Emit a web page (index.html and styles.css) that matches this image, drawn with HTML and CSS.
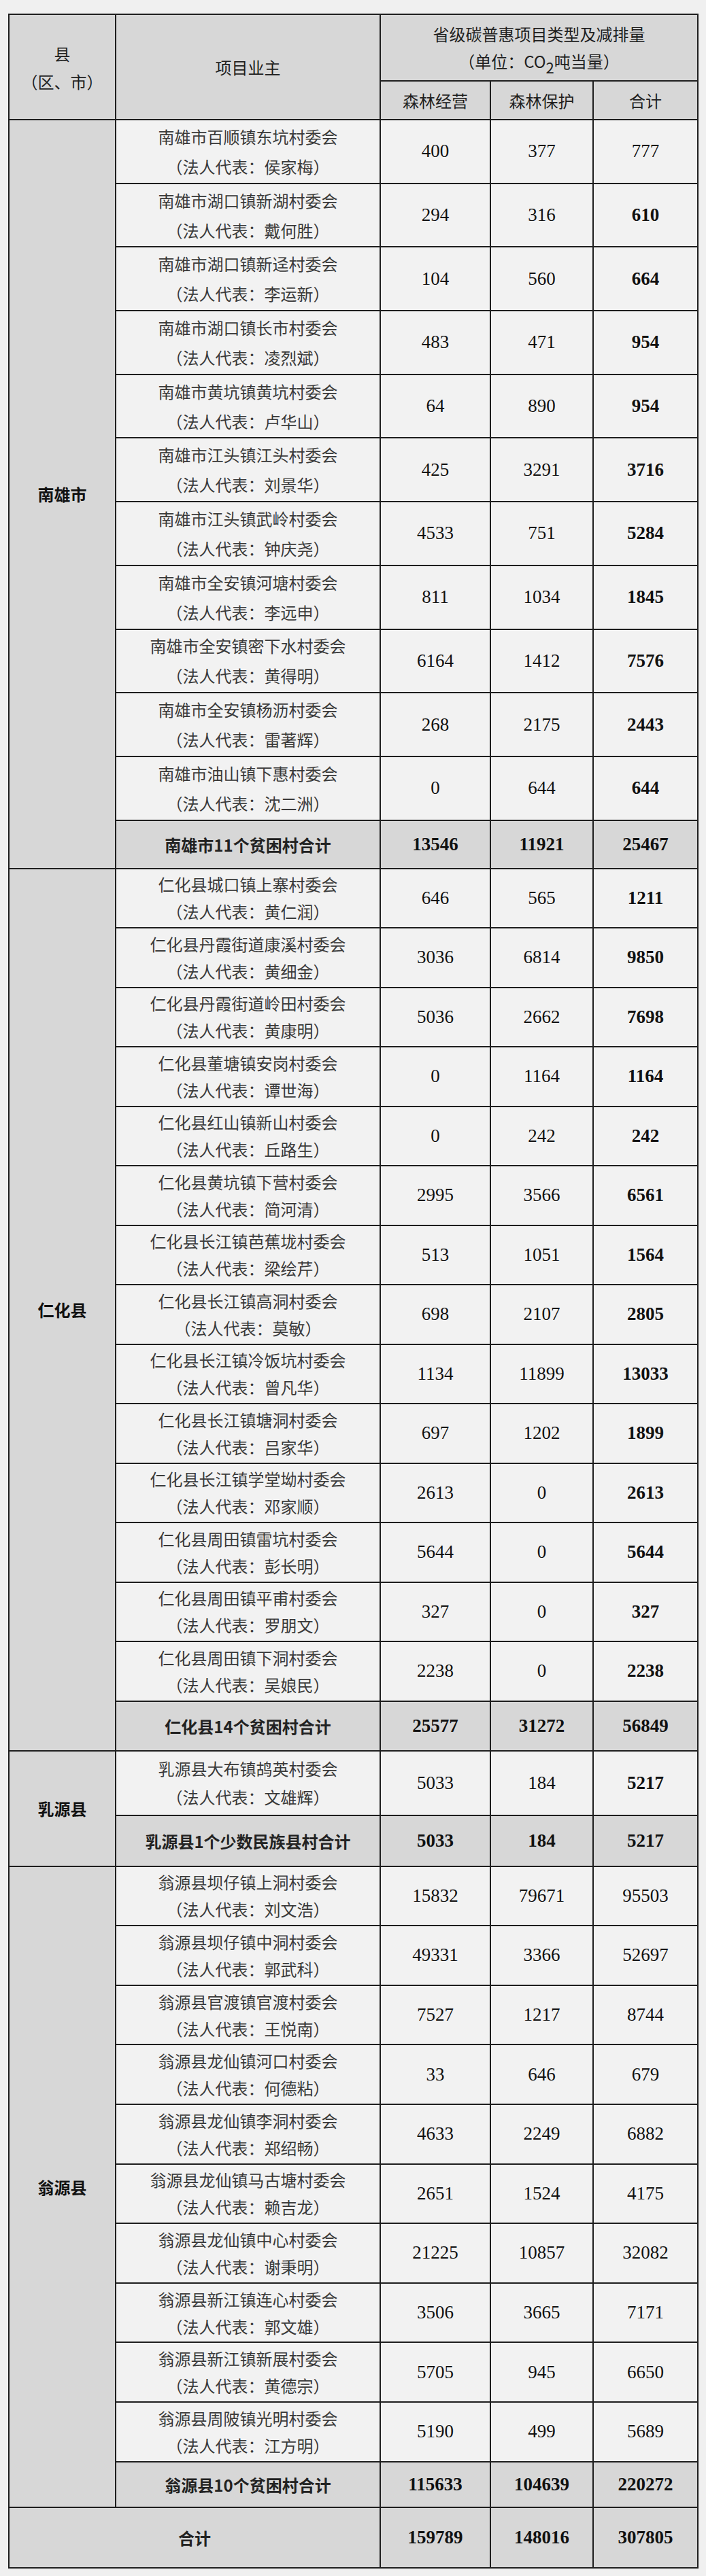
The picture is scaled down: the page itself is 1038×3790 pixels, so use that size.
FILE: index.html
```html
<!DOCTYPE html>
<html lang="zh-CN">
<head>
<meta charset="utf-8">
<title>省级碳普惠项目类型及减排量</title>
<link rel="stylesheet" href="styles.css">
</head>
<body>
<table class="tbl">
  <colgroup>
    <col class="c1"><col class="c2"><col class="c3"><col class="c4"><col class="c5">
  </colgroup>
  <thead>
    <tr class="h1">
      <th rowspan="2" class="gray">县<br>（区、市）</th>
      <th rowspan="2" class="gray">项目业主</th>
      <th colspan="3" class="gray">省级碳普惠项目类型及减排量<br>（单位：CO<sub>2</sub>吨当量）</th>
    </tr>
    <tr class="h2">
      <th class="gray">森林经营</th>
      <th class="gray">森林保护</th>
      <th class="gray">合计</th>
    </tr>
  </thead>
  <tbody>
    <tr class="nx"><td rowspan="12" class="county">南雄市</td><td class="owner">南雄市百顺镇东坑村委会<br>（法人代表：侯家梅）</td><td class="num">400</td><td class="num">377</td><td class="num">777</td></tr>
    <tr class="nx"><td class="owner">南雄市湖口镇新湖村委会<br>（法人代表：戴何胜）</td><td class="num">294</td><td class="num">316</td><td class="num b">610</td></tr>
    <tr class="nx"><td class="owner">南雄市湖口镇新迳村委会<br>（法人代表：李运新）</td><td class="num">104</td><td class="num">560</td><td class="num b">664</td></tr>
    <tr class="nx"><td class="owner">南雄市湖口镇长市村委会<br>（法人代表：凌烈斌）</td><td class="num">483</td><td class="num">471</td><td class="num b">954</td></tr>
    <tr class="nx"><td class="owner">南雄市黄坑镇黄坑村委会<br>（法人代表：卢华山）</td><td class="num">64</td><td class="num">890</td><td class="num b">954</td></tr>
    <tr class="nx"><td class="owner">南雄市江头镇江头村委会<br>（法人代表：刘景华）</td><td class="num">425</td><td class="num">3291</td><td class="num b">3716</td></tr>
    <tr class="nx"><td class="owner">南雄市江头镇武岭村委会<br>（法人代表：钟庆尧）</td><td class="num">4533</td><td class="num">751</td><td class="num b">5284</td></tr>
    <tr class="nx"><td class="owner">南雄市全安镇河塘村委会<br>（法人代表：李远申）</td><td class="num">811</td><td class="num">1034</td><td class="num b">1845</td></tr>
    <tr class="nx"><td class="owner">南雄市全安镇密下水村委会<br>（法人代表：黄得明）</td><td class="num">6164</td><td class="num">1412</td><td class="num b">7576</td></tr>
    <tr class="nx"><td class="owner">南雄市全安镇杨沥村委会<br>（法人代表：雷著辉）</td><td class="num">268</td><td class="num">2175</td><td class="num b">2443</td></tr>
    <tr class="nx"><td class="owner">南雄市油山镇下惠村委会<br>（法人代表：沈二洲）</td><td class="num">0</td><td class="num">644</td><td class="num b">644</td></tr>
    <tr class="sub s-nx"><td class="label">南雄市11个贫困村合计</td><td class="num b">13546</td><td class="num b">11921</td><td class="num b">25467</td></tr>

    <tr class="rh"><td rowspan="15" class="county">仁化县</td><td class="owner">仁化县城口镇上寨村委会<br>（法人代表：黄仁润）</td><td class="num">646</td><td class="num">565</td><td class="num b">1211</td></tr>
    <tr class="rh"><td class="owner">仁化县丹霞街道康溪村委会<br>（法人代表：黄细金）</td><td class="num">3036</td><td class="num">6814</td><td class="num b">9850</td></tr>
    <tr class="rh"><td class="owner">仁化县丹霞街道岭田村委会<br>（法人代表：黄康明）</td><td class="num">5036</td><td class="num">2662</td><td class="num b">7698</td></tr>
    <tr class="rh"><td class="owner">仁化县董塘镇安岗村委会<br>（法人代表：谭世海）</td><td class="num">0</td><td class="num">1164</td><td class="num b">1164</td></tr>
    <tr class="rh"><td class="owner">仁化县红山镇新山村委会<br>（法人代表：丘路生）</td><td class="num">0</td><td class="num">242</td><td class="num b">242</td></tr>
    <tr class="rh"><td class="owner">仁化县黄坑镇下营村委会<br>（法人代表：简河清）</td><td class="num">2995</td><td class="num">3566</td><td class="num b">6561</td></tr>
    <tr class="rh"><td class="owner">仁化县长江镇芭蕉垅村委会<br>（法人代表：梁绘芹）</td><td class="num">513</td><td class="num">1051</td><td class="num b">1564</td></tr>
    <tr class="rh"><td class="owner">仁化县长江镇高洞村委会<br>（法人代表：莫敏）</td><td class="num">698</td><td class="num">2107</td><td class="num b">2805</td></tr>
    <tr class="rh"><td class="owner">仁化县长江镇冷饭坑村委会<br>（法人代表：曾凡华）</td><td class="num">1134</td><td class="num">11899</td><td class="num b">13033</td></tr>
    <tr class="rh"><td class="owner">仁化县长江镇塘洞村委会<br>（法人代表：吕家华）</td><td class="num">697</td><td class="num">1202</td><td class="num b">1899</td></tr>
    <tr class="rh"><td class="owner">仁化县长江镇学堂坳村委会<br>（法人代表：邓家顺）</td><td class="num">2613</td><td class="num">0</td><td class="num b">2613</td></tr>
    <tr class="rh"><td class="owner">仁化县周田镇雷坑村委会<br>（法人代表：彭长明）</td><td class="num">5644</td><td class="num">0</td><td class="num b">5644</td></tr>
    <tr class="rh"><td class="owner">仁化县周田镇平甫村委会<br>（法人代表：罗朋文）</td><td class="num">327</td><td class="num">0</td><td class="num b">327</td></tr>
    <tr class="rh"><td class="owner">仁化县周田镇下洞村委会<br>（法人代表：吴娘民）</td><td class="num">2238</td><td class="num">0</td><td class="num b">2238</td></tr>
    <tr class="sub s-rh"><td class="label">仁化县14个贫困村合计</td><td class="num b">25577</td><td class="num b">31272</td><td class="num b">56849</td></tr>

    <tr class="ry"><td rowspan="2" class="county">乳源县</td><td class="owner">乳源县大布镇鸪英村委会<br>（法人代表：文雄辉）</td><td class="num">5033</td><td class="num">184</td><td class="num b">5217</td></tr>
    <tr class="sub s-ry"><td class="label">乳源县1个少数民族县村合计</td><td class="num b">5033</td><td class="num b">184</td><td class="num b">5217</td></tr>

    <tr class="wy"><td rowspan="11" class="county">翁源县</td><td class="owner">翁源县坝仔镇上洞村委会<br>（法人代表：刘文浩）</td><td class="num">15832</td><td class="num">79671</td><td class="num">95503</td></tr>
    <tr class="wy"><td class="owner">翁源县坝仔镇中洞村委会<br>（法人代表：郭武科）</td><td class="num">49331</td><td class="num">3366</td><td class="num">52697</td></tr>
    <tr class="wy"><td class="owner">翁源县官渡镇官渡村委会<br>（法人代表：王悦南）</td><td class="num">7527</td><td class="num">1217</td><td class="num">8744</td></tr>
    <tr class="wy"><td class="owner">翁源县龙仙镇河口村委会<br>（法人代表：何德粘）</td><td class="num">33</td><td class="num">646</td><td class="num">679</td></tr>
    <tr class="wy"><td class="owner">翁源县龙仙镇李洞村委会<br>（法人代表：郑绍畅）</td><td class="num">4633</td><td class="num">2249</td><td class="num">6882</td></tr>
    <tr class="wy"><td class="owner">翁源县龙仙镇马古塘村委会<br>（法人代表：赖吉龙）</td><td class="num">2651</td><td class="num">1524</td><td class="num">4175</td></tr>
    <tr class="wy"><td class="owner">翁源县龙仙镇中心村委会<br>（法人代表：谢秉明）</td><td class="num">21225</td><td class="num">10857</td><td class="num">32082</td></tr>
    <tr class="wy"><td class="owner">翁源县新江镇连心村委会<br>（法人代表：郭文雄）</td><td class="num">3506</td><td class="num">3665</td><td class="num">7171</td></tr>
    <tr class="wy"><td class="owner">翁源县新江镇新展村委会<br>（法人代表：黄德宗）</td><td class="num">5705</td><td class="num">945</td><td class="num">6650</td></tr>
    <tr class="wy"><td class="owner">翁源县周陂镇光明村委会<br>（法人代表：江方明）</td><td class="num">5190</td><td class="num">499</td><td class="num">5689</td></tr>
    <tr class="sub s-wy"><td class="label">翁源县10个贫困村合计</td><td class="num b">115633</td><td class="num b">104639</td><td class="num b">220272</td></tr>

    <tr class="sub grand"><td colspan="2" class="label">合计</td><td class="num b">159789</td><td class="num b">148016</td><td class="num b">307805</td></tr>
  </tbody>
</table>
</body>
</html>
```
FILE: styles.css
```css
html, body {
  margin: 0;
  padding: 0;
  background: #f0f0f0;
}
body {
  padding: 20px 13px 13px 12px;
  font-family: "Noto Sans CJK SC", "Noto Sans", sans-serif;
  color: #333;
}
.tbl {
  width: 1013px;
  border-collapse: collapse;
  table-layout: fixed;
  background: #f2f2f2;
}
.c1 { width: 157px; }
.c2 { width: 389px; }
.c3 { width: 162px; }
.c4 { width: 151px; }
.c5 { width: 154px; }

.tbl th, .tbl td {
  border: 2px solid #1e1e1e;
  padding: 0;
  text-align: center;
  vertical-align: middle;
}
.tbl th {
  font-weight: normal;
  font-size: 24px;
  line-height: 40px;
  color: #1f1f1f;
}
.gray, .county, .sub td {
  background: #d7d7d7;
}
.h1 { height: 98px; }
.h2 { height: 57px; }
.h1 th:first-child { line-height: 41px; }
.h1 sub {
  font-size: 0.92em;
  line-height: 0;
  vertical-align: -0.36em;
}
.county {
  font-size: 24px;
  font-weight: bold;
  color: #111;
}
.owner {
  font-size: 24px;
  color: #3a3a3a;
  line-height: 40px;
}
.num {
  font-family: "Liberation Serif", "Times New Roman", serif;
  font-size: 27px;
  color: #111;
}
.num.b { font-weight: bold; }
.label {
  font-size: 24px;
  font-weight: bold;
  color: #222;
}

tr.nx { height: 93.7px; }
tr.nx .owner { line-height: 44px; }
tr.rh { height: 87.5px; }
tr.ry { height: 95px; }
tr.ry .owner { line-height: 42px; }
tr.wy { height: 87.6px; }
tr.s-nx { height: 71px; }
tr.s-rh { height: 73px; }
tr.s-ry { height: 75px; }
tr.s-wy { height: 67px; }
tr.grand { height: 89px; }
```
